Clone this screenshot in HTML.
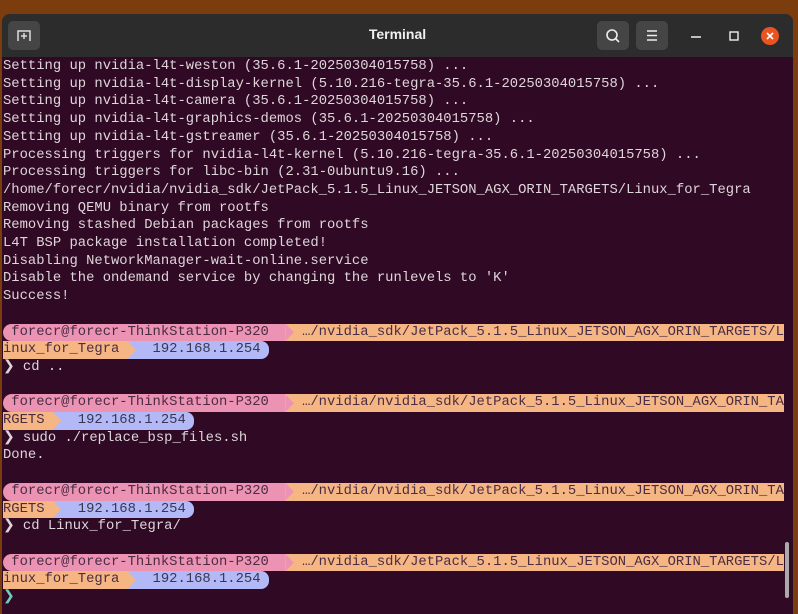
<!DOCTYPE html>
<html><head><meta charset="utf-8"><style>
*{margin:0;padding:0;box-sizing:border-box}
body{width:798px;height:608px;overflow:hidden;background:#7b3d0e;position:relative;font-family:"Liberation Mono",monospace}
#win{position:absolute;left:2px;top:14px;width:791px;height:600px;background:#300a24;border-radius:8px 8px 0 0;overflow:hidden}
#tb{position:absolute;left:0;top:0;width:100%;height:43px;background:#2c2c2c}
.btn{position:absolute;top:7px;width:32px;height:29px;border-radius:5px;background:#454545}
#title{position:absolute;left:0;width:100%;top:12px;text-align:center;color:#f0f0f0;font:bold 14px "Liberation Sans",sans-serif}
pre{position:absolute;left:3px;top:58px;font-size:13.85px;line-height:17.7px;color:#ded6da;font-family:"Liberation Mono",monospace}
.p,.o,.l{display:inline-block;height:17.7px;vertical-align:top}
.p{background:#ec92b2;color:#4a2c45}
.o{background:#f6b684;color:#4a2c45}
.l{background:#b2b9f6;color:#3a3550}
.rl{border-radius:9px 0 0 9px}
.rr{border-radius:0 9px 9px 0}
.e{display:inline-block;width:1ch;overflow:hidden;vertical-align:top}
.a{display:inline-block;position:relative;width:1ch;height:17.7px;vertical-align:top}
.a i{position:absolute;left:0;top:0;width:100%;height:100%;clip-path:polygon(0 0,100% 50%,0 100%)}
.ap{background:#f6b684}.ap i{background:#ec92b2}
.ao{background:#b2b9f6}.ao i{background:#f6b684}
.g{color:#6fd0c0}
</style></head><body>
<div id="win">
<div id="tb">
 <div class="btn" style="left:6px"><svg width="32" height="29"><path d="M10 20V10h12v10M13 15h6M16 12v6" stroke="#ddd" stroke-width="1.5" fill="none"/></svg></div>
 <div id="title">Terminal</div>
 <div class="btn" style="left:595px"><svg width="32" height="29"><circle cx="15" cy="14" r="5" stroke="#eee" stroke-width="1.6" fill="none"/><path d="M19 18l3 3" stroke="#eee" stroke-width="1.6"/></svg></div>
 <div class="btn" style="left:634px"><svg width="32" height="29"><path d="M11 10h10M11 14.5h10M11 19h10" stroke="#eee" stroke-width="1.4"/></svg></div>
 <svg style="position:absolute;left:680px;top:8px" width="100" height="28"><path d="M9 15h10" stroke="#eee" stroke-width="1.5"/><rect x="48" y="10" width="8" height="8" stroke="#eee" stroke-width="1.4" fill="none"/><circle cx="88" cy="14" r="9" fill="#e95420"/><path d="M85 11l6 6M91 11l-6 6" stroke="#fff" stroke-width="1.6"/></svg>
</div>
<div style="position:absolute;left:783px;top:528px;width:4px;height:56px;border-radius:2px;background:#aaa"></div>
</div>
<pre>Setting up nvidia-l4t-weston (35.6.1-20250304015758) ...
Setting up nvidia-l4t-display-kernel (5.10.216-tegra-35.6.1-20250304015758) ...
Setting up nvidia-l4t-camera (35.6.1-20250304015758) ...
Setting up nvidia-l4t-graphics-demos (35.6.1-20250304015758) ...
Setting up nvidia-l4t-gstreamer (35.6.1-20250304015758) ...
Processing triggers for nvidia-l4t-kernel (5.10.216-tegra-35.6.1-20250304015758) ...
Processing triggers for libc-bin (2.31-0ubuntu9.16) ...
/home/forecr/nvidia/nvidia_sdk/JetPack_5.1.5_Linux_JETSON_AGX_ORIN_TARGETS/Linux_for_Tegra
Removing QEMU binary from rootfs
Removing stashed Debian packages from rootfs
L4T BSP package installation completed!
Disabling NetworkManager-wait-online.service
Disable the ondemand service by changing the runlevels to 'K'
Success!

<span class="p rl"> forecr@forecr-ThinkStation-P320  </span><span class="a ap"><i></i></span><span class="o"> <span class="e">…</span>/nvidia_sdk/JetPack_5.1.5_Linux_JETSON_AGX_ORIN_TARGETS/L</span>
<span class="o">inux_for_Tegra </span><span class="a ao"><i></i></span><span class="l">  192.168.1.254</span><span class="l rr"> </span>
❯ cd ..

<span class="p rl"> forecr@forecr-ThinkStation-P320  </span><span class="a ap"><i></i></span><span class="o"> <span class="e">…</span>/nvidia/nvidia_sdk/JetPack_5.1.5_Linux_JETSON_AGX_ORIN_TA</span>
<span class="o">RGETS </span><span class="a ao"><i></i></span><span class="l">  192.168.1.254</span><span class="l rr"> </span>
❯ sudo ./replace_bsp_files.sh
Done.

<span class="p rl"> forecr@forecr-ThinkStation-P320  </span><span class="a ap"><i></i></span><span class="o"> <span class="e">…</span>/nvidia/nvidia_sdk/JetPack_5.1.5_Linux_JETSON_AGX_ORIN_TA</span>
<span class="o">RGETS </span><span class="a ao"><i></i></span><span class="l">  192.168.1.254</span><span class="l rr"> </span>
❯ cd Linux_for_Tegra/

<span class="p rl"> forecr@forecr-ThinkStation-P320  </span><span class="a ap"><i></i></span><span class="o"> <span class="e">…</span>/nvidia_sdk/JetPack_5.1.5_Linux_JETSON_AGX_ORIN_TARGETS/L</span>
<span class="o">inux_for_Tegra </span><span class="a ao"><i></i></span><span class="l">  192.168.1.254</span><span class="l rr"> </span>
<span class="g">❯</span></pre>
</body></html>
